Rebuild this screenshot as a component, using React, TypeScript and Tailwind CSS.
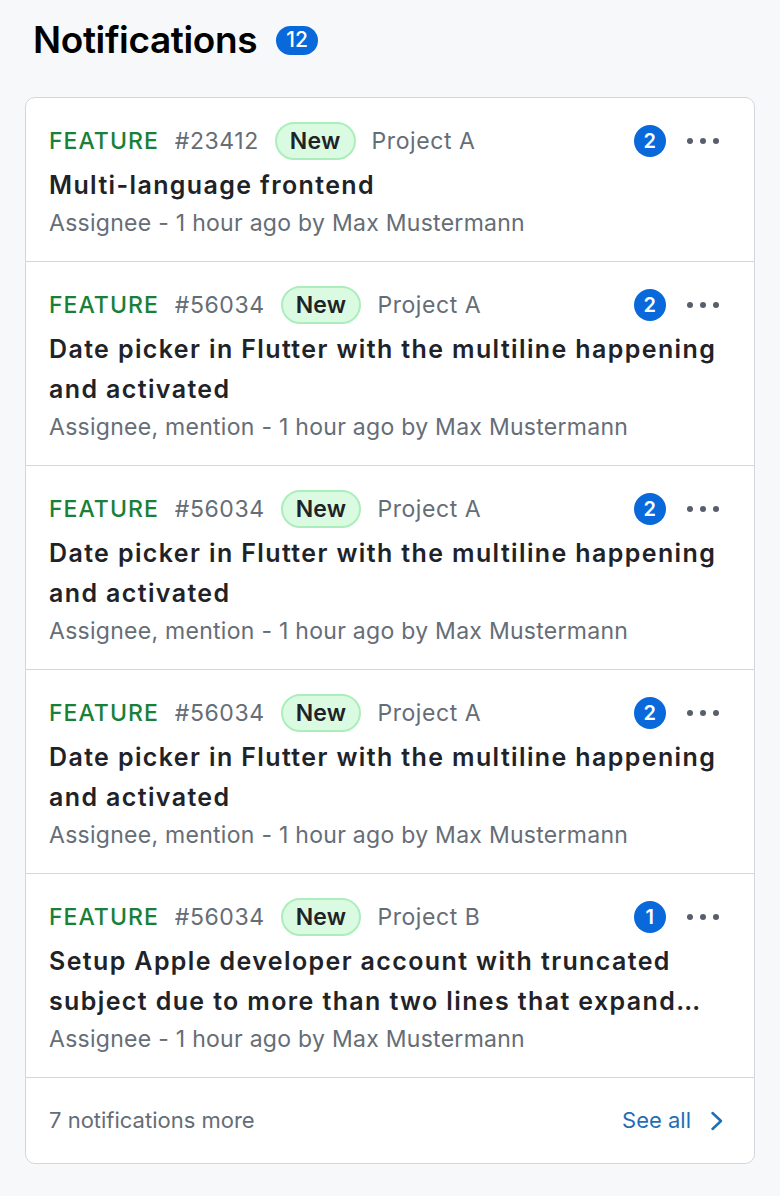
import React from "react";

type Item = {
  id: string;
  project: string;
  count: number;
  title: string;
  reason: string;
};

const items: Item[] = [
  { id: "#23412", project: "Project A", count: 2, title: "Multi-language frontend", reason: "Assignee" },
  { id: "#56034", project: "Project A", count: 2, title: "Date picker in Flutter with the multiline happening and activated", reason: "Assignee, mention" },
  { id: "#56034", project: "Project A", count: 2, title: "Date picker in Flutter with the multiline happening and activated", reason: "Assignee, mention" },
  { id: "#56034", project: "Project A", count: 2, title: "Date picker in Flutter with the multiline happening and activated", reason: "Assignee, mention" },
  { id: "#56034", project: "Project B", count: 1, title: "Setup Apple developer account with truncated subject due to more than two lines that expand over the limit", reason: "Assignee" },
];

const Dots = () => (
  <svg width="34" height="8" viewBox="0 0 34 8" className="fill-[#57606a]">
    <circle cx="4" cy="4" r="3" />
    <circle cx="17" cy="4" r="3" />
    <circle cx="30" cy="4" r="3" />
  </svg>
);

const Chevron = () => (
  <svg width="14" height="20" viewBox="0 0 14 20" fill="none" className="stroke-[#1f6fb5]">
    <path d="M2.5 2 L11 10 L2.5 18" strokeWidth="2.5" strokeLinecap="round" strokeLinejoin="round" />
  </svg>
);

const NotificationRow: React.FC<{ item: Item }> = ({ item }) => (
  <div className="border-b border-[#d0d7de] pl-[23px] pr-[34px] pt-6 pb-[22px]">
    <div className="flex items-center h-[38px] text-[23px] tracking-[0.025em]">
      <span className="font-medium tracking-[0.045em] text-[#1a7f37]">FEATURE</span>
      <span className="ml-4 text-[#656d76]">{item.id}</span>
      <span className="ml-4 h-[38px] px-[13px] flex items-center rounded-full bg-[#dafbe1] border-2 border-[#aceebb] font-semibold tracking-[0.01em] text-[#1f2328]">
        New
      </span>
      <span className="ml-4 text-[#656d76]">{item.project}</span>
      <span className="ml-auto w-8 h-8 rounded-full bg-[#0969da] text-white text-[20px] font-semibold flex items-center justify-center">
        {item.count}
      </span>
      <span className="ml-[20px] flex items-center">
        <Dots />
      </span>
    </div>
    <div className="mt-[5px] text-[25px] leading-[40px] font-semibold tracking-[0.055em] text-[#1f2328] line-clamp-2">
      {item.title}
    </div>
    <div className="mt-[2px] text-[23px] leading-[32px] tracking-[0.012em] text-[#656d76]">
      {item.reason} - 1 hour ago by Max Mustermann
    </div>
  </div>
);

export default function App() {
  return (
    <div className="min-h-[1196px] bg-[#f6f8fa] px-[25px] pt-[20px] font-['Inter',sans-serif]">
      <div className="flex items-center ml-2 h-[40px]">
        <h1 className="text-[37px] font-semibold text-black tracking-[-0.01em]">Notifications</h1>
        <span className="ml-[19px] h-[29px] px-[10px] rounded-full bg-[#0969da] text-white text-[21px] font-medium flex items-center">
          12
        </span>
      </div>
      <div className="mt-[37px] bg-white border border-[#d0d7de] rounded-[10px] overflow-hidden">
        {items.map((item, i) => (
          <NotificationRow key={i} item={item} />
        ))}
        <div className="h-[85px] flex items-center pl-[23px] pr-[30px] text-[22px]">
          <span className="text-[#656d76]">7 notifications more</span>
          <span className="ml-auto text-[#1f6fb5]">See all</span>
          <span className="ml-[19px] flex items-center">
            <Chevron />
          </span>
        </div>
      </div>
    </div>
  );
}
